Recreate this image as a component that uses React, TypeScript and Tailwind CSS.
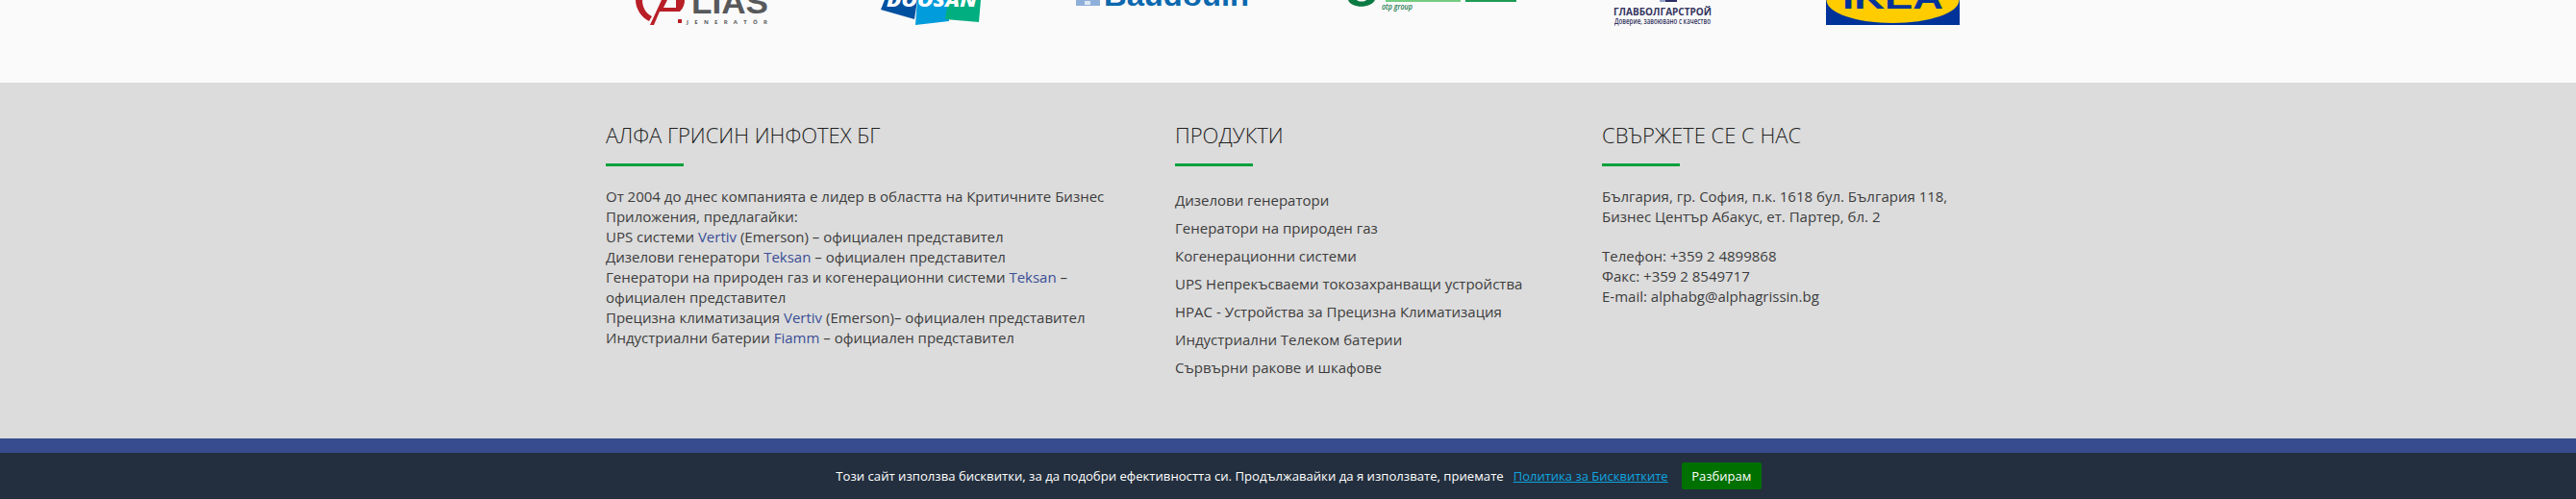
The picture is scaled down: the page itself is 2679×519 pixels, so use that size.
const Logos = () => {
  return (
    <div className="flex h-[86px] items-start overflow-hidden bg-[#fafafa]">
      {/* CIAS */}
      <svg width="140" height="28" viewBox="661 0 140 28" className="ml-[661px] shrink-0">
        <path d="M661 0 C661 9 667 18 675 22 L678 17 C672 14 668 8 668 0 Z" fill="#b81f27" />
        <path d="M688 0 L676 26 L680 26 L686 12 L707 12 C711 8 712 4 712 0 L703 0 L703 8 L690 8 L694 0 Z" fill="#b81f27" />
        <text x="719" y="14" fill="#58595b" fontSize="34" fontWeight="700" textLength="80" lengthAdjust="spacingAndGlyphs" fontFamily="'Liberation Sans', sans-serif">LIAS</text>
        <rect x="705" y="20" width="4" height="4" fill="#b81f27" />
        <text x="714" y="25" fill="#58595b" fontSize="6" fontWeight="700" textLength="84" fontFamily="'Open Sans', sans-serif">JENERATÖR</text>
      </svg>
      {/* Doosan */}
      <svg width="106" height="28" viewBox="917 0 106 28" className="ml-[115px] shrink-0">
        <polygon points="921,0 955,0 952,20 917,10" fill="#0050a0" />
        <polygon points="955,0 987,0 988,22 953,26" fill="#009cdc" />
        <polygon points="987,0 1021,0 1019,23 984,20" fill="#00ae80" />
        <text x="923" y="7" fill="#ffffff" fontSize="20" fontWeight="800" fontStyle="italic" textLength="94" lengthAdjust="spacingAndGlyphs" fontFamily="'Open Sans', sans-serif">DOOSAN</text>
      </svg>
      {/* Baudouin */}
      <svg width="182" height="8" viewBox="1120 0 182 8" className="ml-[97px] shrink-0">
        <rect x="1120" y="0" width="25" height="6" fill="#8fb0da" />
        <rect x="1129" y="1" width="6" height="4" fill="#dce7f4" />
        <text x="1149" y="6" fill="#0b68ae" fontSize="30" fontWeight="700" textLength="151" lengthAdjust="spacingAndGlyphs" fontFamily="'Liberation Sans', sans-serif">Baudouin</text>
      </svg>
      {/* OTP */}
      <svg width="180" height="14" viewBox="1403 0 180 14" className="ml-[101px] shrink-0">
        <path d="M1403 0 C1406 9 1427 9 1431 0 L1422 0 C1420 2 1414 2 1412 0 Z" fill="#0c7a43" />
        <rect x="1442" y="0" width="78" height="2" fill="#74cc80" />
        <rect x="1525" y="0" width="53" height="2" fill="#1f9a55" />
        <text x="1438" y="10" fill="#1a7a50" fontSize="9" fontStyle="italic" fontWeight="600" textLength="32" lengthAdjust="spacingAndGlyphs" fontFamily="'Open Sans', sans-serif">otp group</text>
      </svg>
      {/* Glavbolgarstroy */}
      <svg width="104" height="28" viewBox="1678 0 104 28" className="ml-[95px] shrink-0">
        <rect x="1727" y="0" width="6" height="2" fill="#8fa0c8" />
        <rect x="1733" y="0" width="12" height="2" fill="#2b2d66" />
        <text x="1679" y="16" fill="#34355f" fontSize="11" fontWeight="700" textLength="102" lengthAdjust="spacingAndGlyphs" fontFamily="'Open Sans', sans-serif">ГЛАВБОЛГАРСТРОЙ</text>
        <text x="1680" y="25" fill="#34355f" fontSize="8" fontWeight="600" textLength="100" lengthAdjust="spacingAndGlyphs" fontFamily="'Open Sans', sans-serif">Доверие, завоювано с качество</text>
      </svg>
      {/* IKEA */}
      <svg width="139" height="26" viewBox="1900 0 139 26" className="ml-[118px] shrink-0">
        <rect x="1900" y="0" width="139" height="26" fill="#003399" />
        <ellipse cx="1969.5" cy="0" rx="69" ry="24" fill="#ffcc00" />
        <text x="1917" y="9" fill="#003399" fontSize="33" fontWeight="800" textLength="105" lengthAdjust="spacingAndGlyphs" fontFamily="'Liberation Sans', sans-serif">IKEA</text>
      </svg>
    </div>
  );
};

const Heading = ({ title }: { title: string }) => {
  return (
    <div>
      <h3 className="text-[22px] leading-[26px] font-light text-[#222]">{title}</h3>
      <div className="mt-[17px] h-[3px] w-[81px] bg-[#00a03c]"></div>
    </div>
  );
};

const A = ({ children }: { children: string }) => <a className="text-[#3a4e96]">{children}</a>;

const PRODUCTS = [
  "Дизелови генератори",
  "Генератори на природен газ",
  "Когенерационни системи",
  "UPS Непрекъсваеми токозахранващи устройства",
  "HPAC - Устройства за Прецизна Климатизация",
  "Индустриални Телеком батерии",
  "Сървърни ракове и шкафове",
];

const App = () => {
  return (
    <div className="h-[519px] overflow-hidden bg-[#dcdcdc] font-['Open_Sans',sans-serif] text-[15px] leading-[21px] text-[#3c3c3c]">
      <Logos />
      <div className="h-[370px] pl-[630px] pt-[41px]">
        <div className="flex">
          <div className="w-[592px]">
            <Heading title="АЛФА ГРИСИН ИНФОТЕХ БГ" />
            <p className="mt-[21px] w-[540px]">
              От 2004 до днес компанията е лидер в областта на Критичните Бизнес Приложения, предлагайки:
              <br />
              UPS системи <A>Vertiv</A> (Emerson) – официален представител
              <br />
              Дизелови генератори <A>Teksan</A> – официален представител
              <br />
              Генератори на природен газ и когенерационни системи <A>Teksan</A> – официален представител
              <br />
              Прецизна климатизация <A>Vertiv</A> (Emerson)– официален представител
              <br />
              Индустриални батерии <A>Fiamm</A> – официален представител
            </p>
          </div>
          <div className="w-[444px]">
            <Heading title="ПРОДУКТИ" />
            <ul className="mt-[25px] flex flex-col gap-[8px]">
              {PRODUCTS.map((item) => (
                <li key={item}>{item}</li>
              ))}
            </ul>
          </div>
          <div className="w-[400px]">
            <Heading title="СВЪРЖЕТЕ СЕ С НАС" />
            <p className="mt-[21px]">
              България, гр. София, п.к. 1618 бул. България 118,
              <br />
              Бизнес Център Абакус, ет. Партер, бл. 2
            </p>
            <p className="mt-[20px]">
              Телефон: +359 2 4899868
              <br />
              Факс: +359 2 8549717
              <br />
              E-mail: alphabg@alphagrissin.bg
            </p>
          </div>
        </div>
      </div>
      <div className="h-[15px] bg-[#374c8f]"></div>
      <div className="flex h-[48px] items-center justify-center bg-[#232f3e] pl-[22px] text-[13px] text-white">
        <span className="text-[13.13px]">Този сайт използва бисквитки, за да подобри ефективността си. Продължавайки да я използвате, приемате</span>
        <a className="ml-[10px] text-[#0ea5e0] underline">Политика за Бисквитките</a>
        <button className="ml-[14px] h-[28px] w-[83px] rounded-[2px] bg-[#007000] text-white">Разбирам</button>
      </div>
    </div>
  );
};

export default App;
